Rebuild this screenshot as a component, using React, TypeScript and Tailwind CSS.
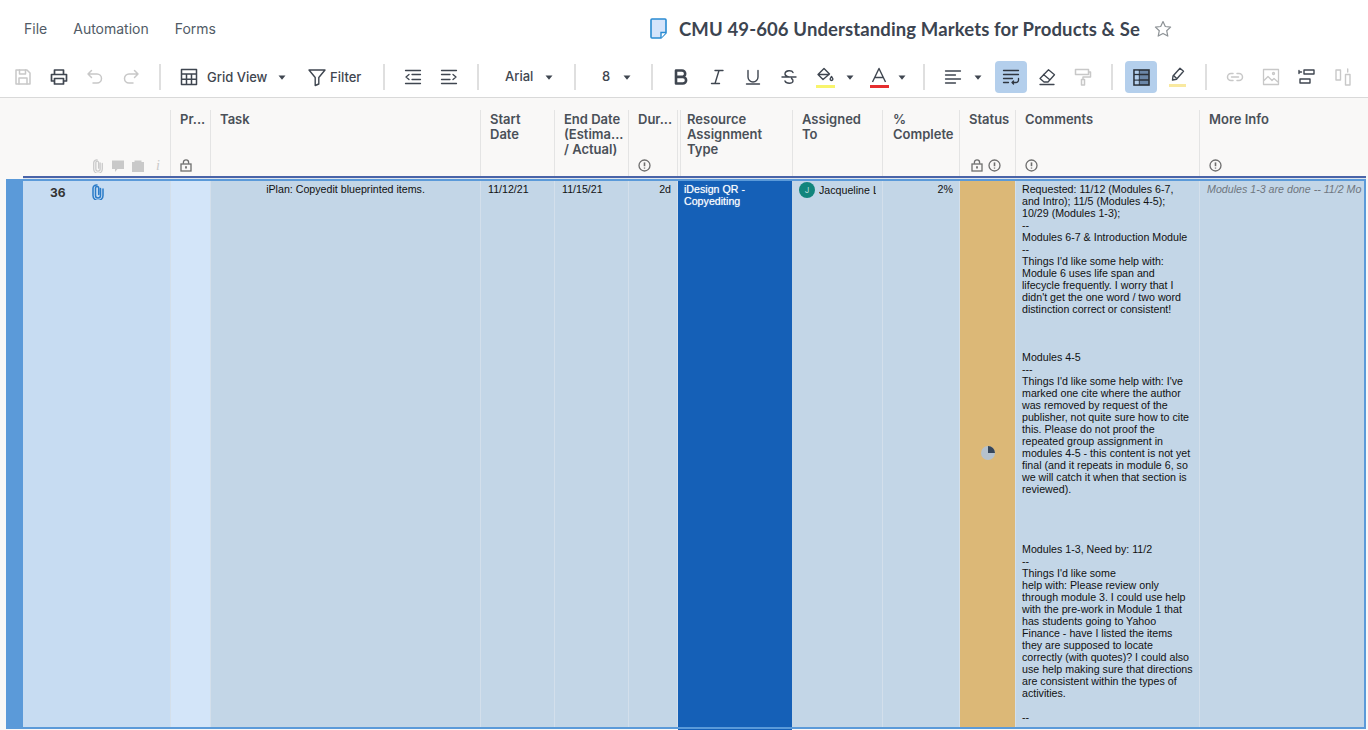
const commentLines = [
  "Requested: 11/12 (Modules 6-7,",
  "and Intro); 11/5 (Modules 4-5);",
  "10/29 (Modules 1-3);",
  "--",
  "Modules 6-7 & Introduction Module",
  "--",
  "Things I'd like some help with:",
  "Module 6 uses life span and",
  "lifecycle frequently. I worry that I",
  "didn't get the one word / two word",
  "distinction correct or consistent!",
  "",
  "",
  "",
  "Modules 4-5",
  "---",
  "Things I'd like some help with: I've",
  "marked one cite where the author",
  "was removed by request of the",
  "publisher, not quite sure how to cite",
  "this. Please do not proof the",
  "repeated group assignment in",
  "modules 4-5 - this content is not yet",
  "final (and it repeats in module 6, so",
  "we will catch it when that section is",
  "reviewed).",
  "",
  "",
  "",
  "",
  "Modules 1-3, Need by: 11/2",
  "--",
  "Things I'd like some",
  "help with: Please review only",
  "through module 3. I could use help",
  "with the pre-work in Module 1 that",
  "has students going to Yahoo",
  "Finance - have I listed the items",
  "they are supposed to locate",
  "correctly (with quotes)? I could also",
  "use help making sure that directions",
  "are consistent within the types of",
  "activities.",
  "",
  "--",
];

function Svg({ children, color = "#3f4650", size = 20, width = 1.5 }: { children: React.ReactNode; color?: string; size?: number; width?: number }) {
  return (
    <svg width={size} height={size} viewBox="0 0 20 20" fill="none" stroke={color} strokeWidth={width} strokeLinecap="round" strokeLinejoin="round">
      {children}
    </svg>
  );
}

function Btn({ children }: { children: React.ReactNode }) {
  return <div className="w-9 h-8 flex items-center justify-center shrink-0">{children}</div>;
}

function Sep() {
  return <div className="w-[2px] h-[26px] mx-[10px] bg-[#dfdfdf] shrink-0" />;
}

function Caret({ className }: { className: string }) {
  return (
    <div className={`flex items-center shrink-0 ${className}`}>
      <svg width="8" height="5" viewBox="0 0 8 5">
        <path d="M0.5 0.5h7L4 4.8z" fill="#3f4650" />
      </svg>
    </div>
  );
}

function InfoIcon() {
  return (
    <svg width="13" height="13" viewBox="0 0 13 13" fill="none">
      <circle cx="6.500" cy="6.500" r="5.500" stroke="#6e6e6e" strokeWidth="1.300" />
      <path d="M6.500 3.400v3.800" stroke="#6e6e6e" strokeWidth="1.600" />
      <path d="M6.500 8.500v1.100" stroke="#6e6e6e" strokeWidth="1.400" />
    </svg>
  );
}

function LockIcon() {
  return (
    <svg width="12" height="13" viewBox="0 0 12 13" fill="none">
      <rect x="1" y="5" width="10" height="7" stroke="#6e6e6e" strokeWidth="1.300" />
      <path d="M3.400 4.800V3.400a2.600 2.600 0 0 1 5.200 0v1.400" stroke="#6e6e6e" strokeWidth="1.300" />
      <path d="M6 7.200v2.200" stroke="#6e6e6e" strokeWidth="1.800" />
    </svg>
  );
}

function Clip({ color, size = 14 }: { color: string; size?: number }) {
  return (
    <svg width={size} height={size + 2} viewBox="0 0 14 16" fill="none" stroke={color} strokeWidth="1.500" strokeLinecap="round">
      <path d="M9.500 4.500v7a2.500 2.500 0 0 1-5 0V4a1.600 1.600 0 0 1 3.200 0v6.500" />
      <path d="M12 5v6.500a5 5 0 0 1-10 0V4a3.500 3.500 0 0 1 4-3" />
    </svg>
  );
}

function HeadCell({ w, lines, icons, pad = "pl-[9px]" }: { w: string; lines: string[]; icons?: React.ReactNode; pad?: string }) {
  return (
    <div className={`${w} ${pad} shrink-0 h-[66px] border-r border-[#e4e4e4] flex flex-col justify-between pt-[2px] pb-[4px] overflow-hidden`}>
      <div className="text-[13px] leading-[15px] font-semibold text-[#4a5058] whitespace-nowrap">
        {lines.map((l) => (
          <div key={l}>{l}</div>
        ))}
      </div>
      <div className="flex gap-[5px] h-[13px]">{icons}</div>
    </div>
  );
}

function BodyCell({ w, className = "", children }: { w: string; className?: string; children?: React.ReactNode }) {
  return <div className={`${w} shrink-0 border-r border-[#d3dfeb] overflow-hidden ${className}`}>{children}</div>;
}

export default function App() {
  return (
    <div className="w-[1368px] h-[730px] overflow-hidden bg-[#f9f8f7] font-['Inter',sans-serif]">
      {/* top bar */}
      <div className="bg-white h-[57px] flex items-center pl-6">
        <div className="flex gap-[26px] text-[14px] text-[#515b66]">
          <span>File</span>
          <span>Automation</span>
          <span>Forms</span>
        </div>
        <div className="ml-[434px] flex items-center">
          <svg width="17" height="21" viewBox="0 0 17 21" fill="none">
            <path d="M2 1h13a1 1 0 0 1 1 1v13l-5 5H2a1 1 0 0 1-1-1V2a1 1 0 0 1 1-1z" fill="#d5e4fb" stroke="#2a8bd2" strokeWidth="1.600" />
            <path d="M16 14.500h-5v5.500" fill="#fff" stroke="#2a8bd2" strokeWidth="1.400" />
          </svg>
          <span className="ml-[12px] mt-[2px] text-[18.5px] font-bold text-[#3c4450] font-['Lato',sans-serif] tracking-[0.12px] whitespace-nowrap">
            CMU 49-606 Understanding Markets for Products &amp; Se
          </span>
          <svg className="ml-[14px]" width="18" height="18" viewBox="0 0 18 18" fill="none">
            <path d="M9 1.500l2.300 5 5.300.6-3.900 3.600 1.100 5.400L9 13.400l-4.800 2.700 1.100-5.400L1.400 7.100l5.300-.6z" stroke="#8d9296" strokeWidth="1.200" strokeLinejoin="round" />
          </svg>
        </div>
      </div>

      {/* toolbar */}
      <div className="bg-white h-[40px] border-b border-[#d9d9d9] box-content flex items-center pl-[5px] text-[13px] font-medium text-[#3f4650]">
        <Btn>
          <Svg color="#c8c8c8">
            <path d="M3 3h11l3 3v11H3z" />
            <path d="M6.500 3v4h6V3M6 17v-6h8v6" />
          </Svg>
        </Btn>
        <Btn>
          <Svg width={1.7}>
            <path d="M5.500 7V3h9v4M5 14H2.500V7.500h15V14H15" />
            <path d="M5.500 11.500h9V17h-9z" />
          </Svg>
        </Btn>
        <Btn>
          <Svg color="#c8c8c8">
            <path d="M6.500 3.500L3 7l3.500 3.500M3 7h9a4.500 4.500 0 0 1 0 9H8" />
          </Svg>
        </Btn>
        <Btn>
          <Svg color="#c8c8c8">
            <path d="M13.500 3.500L17 7l-3.500 3.500M17 7H8a4.500 4.500 0 0 0 0 9h4" />
          </Svg>
        </Btn>
        <Sep />
        <Btn>
          <Svg>
            <path d="M2.500 2.500h15v15h-15zM2.500 7h15M2.500 12.200h15M7.500 7v10.500M12.500 7v10.500" />
          </Svg>
        </Btn>
        <span className="w-[71px] shrink-0 mt-[2px]">Grid View</span>
        <Caret className="w-[21px]" />
        <div className="w-[8px] shrink-0" />
        <svg width="20" height="20" viewBox="0 0 20 20" fill="none" stroke="#3f4650" strokeWidth="1.400" strokeLinejoin="round" className="shrink-0">
          <path d="M2 3h16l-6.200 7.500V17l-3.600 1.500v-8z" />
        </svg>
        <span className="ml-[3px] w-[53px] shrink-0 mt-[2px]">Filter</span>
        <div className="w-[2px] h-[26px] bg-[#dfdfdf] shrink-0" />
        <div className="w-[10px] shrink-0" />
        <Btn>
          <Svg width={1.3}>
            <path d="M2.500 3.500h15M2.500 16.500h15M9 7.500h8.500M9 12.500h8.500M6 7.500L3 10l3 2.500" />
          </Svg>
        </Btn>
        <Btn>
          <Svg width={1.3}>
            <path d="M2.500 3.500h15M2.500 16.500h15M2.500 7.500H11M2.500 12.500H11M14 7.500l3 2.500-3 2.500" />
          </Svg>
        </Btn>
        <Sep />
        <span className="w-[56px] pl-[16px] shrink-0">Arial</span>
        <Caret className="w-[19px]" />
        <Sep />
        <span className="w-[30px] pl-[16px] shrink-0">8</span>
        <Caret className="w-[25px] pl-[7px]" />
        <Sep />
        <Btn>
          <svg width="20" height="20" viewBox="0 0 20 20" fill="none" stroke="#3f4650" strokeWidth="2.600" strokeLinejoin="round">
            <path d="M5 3.500h6a3.200 3.200 0 0 1 0 6.400H5zM5 9.900h6.800a3.300 3.300 0 0 1 0 6.600H5z" />
          </svg>
        </Btn>
        <Btn>
          <Svg width={1.4}>
            <path d="M8 3.500h8M4.500 16.500h8M12 3.500l-4 13" />
          </Svg>
        </Btn>
        <Btn>
          <Svg width={1.4}>
            <path d="M5 3.500V10a5 5 0 0 0 10 0V3.500M3.500 17h13" />
          </Svg>
        </Btn>
        <Btn>
          <Svg width={1.4}>
            <path d="M14 5.500C13 3 6.500 3 6 6.500c-.3 2 2 3 4 3.500M3 10h14M6 14c1 3 8 3 8 0 0-1-.5-2-1.500-2.500" />
          </Svg>
        </Btn>
        <Btn>
          <div className="flex flex-col items-center">
            <svg width="18" height="16" viewBox="0 0 18 16" fill="none" stroke="#3f4650" strokeWidth="1.400" strokeLinejoin="round">
              <path d="M8 1.500l-6 6 5 5 6.500-5.500zM2 7.500h11.500" />
              <path d="M15.500 9.500c-1 1.500-1.400 2-1.400 2.600a1.400 1.400 0 0 0 2.800 0c0-.6-.4-1.100-1.400-2.600z" />
            </svg>
            <div className="w-[19px] h-[3px] mt-[2px] bg-[#f8f46c]" />
          </div>
        </Btn>
        <Caret className="w-[18px] pl-[3px]" />
        <Btn>
          <div className="flex flex-col items-center">
            <svg width="18" height="16" viewBox="0 0 18 16" fill="none" stroke="#3f4650" strokeWidth="1.400" strokeLinejoin="round">
              <path d="M2.500 15L9 1.500 15.500 15M4.800 10.500h8.400" />
            </svg>
            <div className="w-[19px] h-[3px] mt-[2px] bg-[#e62e2e]" />
          </div>
        </Btn>
        <Caret className="w-[16px] pl-[1px]" />
        <Sep />
        <Btn>
          <Svg width={1.3}>
            <path d="M2.500 4h15M2.500 8h10M2.500 12h15M2.500 16h10" />
          </Svg>
        </Btn>
        <Caret className="w-[22px] pl-[3px]" />
        <Btn>
          <div className="w-8 h-8 rounded-[4px] bg-[#b4cfec] flex items-center justify-center">
            <Svg width={1.3} color="#2f3640">
              <path d="M2.500 3.500h15M2.500 7.500h15M2.500 11.500h9M2.500 15.500h5M17.500 11.500v1.500a2.500 2.500 0 0 1-2.500 2.500h-4M12.500 14l-1.500 1.500 1.500 1.500" />
            </Svg>
          </div>
        </Btn>
        <Btn>
          <Svg width={1.3}>
            <path d="M11.500 2.800l6 5-6.500 7.200H7l-4-3.500zM6.500 7.500l6 5M3 17.500h14" />
          </Svg>
        </Btn>
        <Btn>
          <Svg color="#c8c8c8" width={1.5}>
            <path d="M2.500 2.500h13v5h-13zM15.500 5h2v5H10v2.500M8.500 12.500h3v5.500h-3z" />
          </Svg>
        </Btn>
        <Sep />
        <Btn>
          <div className="w-8 h-8 rounded-[4px] bg-[#b4cfec] flex items-center justify-center">
            <svg width="17" height="17" viewBox="0 0 17 17">
              <rect x="1" y="1" width="15" height="15" fill="#6b87a8" stroke="#2a3038" strokeWidth="1.600" />
              <path d="M1 5.500h15M1 11h15M6 1v15" stroke="#2a3038" strokeWidth="1.300" />
              <path d="M1.800 1.800h4v3h-4zM1.800 6.200h4v4.200h-4zM1.800 11.700h4v3.500h-4z" fill="#b4cfec" />
            </svg>
          </div>
        </Btn>
        <Btn>
          <div className="flex flex-col items-center">
            <svg width="18" height="16" viewBox="0 0 18 16" fill="none" stroke="#3f4650" strokeWidth="1.400" strokeLinejoin="round">
              <path d="M12 1.200l3.500 3-7 8-4 .8.500-4z" />
              <path d="M5.500 8.500l3.200 3" />
            </svg>
            <div className="w-[17px] h-[3px] mt-[1px] bg-[#f9e9a0]" />
          </div>
        </Btn>
        <Sep />
        <Btn>
          <Svg color="#c8c8c8" width={1.5}>
            <path d="M8 6.500H6a3.500 3.500 0 0 0 0 7h2M12 6.500h2a3.500 3.500 0 0 1 0 7h-2M6.500 10h7" />
          </Svg>
        </Btn>
        <Btn>
          <Svg color="#c8c8c8" width={1.3}>
            <path d="M2.500 2.500h15v15h-15zM2.500 14l4.500-4.500 4 4 2-2 4.500 4" />
            <circle cx="12.500" cy="6.500" r="1" />
          </Svg>
        </Btn>
        <Btn>
          <Svg width={1.4}>
            <path d="M7 3h10v4H7zM3 12h10v4H3zM3 5h1.500M2 3.500v3" />
          </Svg>
        </Btn>
        <Btn>
          <Svg color="#c8c8c8" width={1.4}>
            <path d="M3 3h4.500v10H3zM12.500 7.500H17V18h-4.500zM14.700 2v3" />
          </Svg>
        </Btn>
      </div>

      {/* header row */}
      <div className="h-[78px] pt-3 flex">
        <div className="w-[171px] shrink-0 h-[66px] border-r border-[#e4e4e4] flex items-end pb-[3px] pl-[92px] gap-[8px]">
          <Clip color="#c9c9c9" size={12} />
          <svg width="12" height="14" viewBox="0 0 12 14">
            <path d="M0 1.500h12v8.500H5.500L3 13v-3H0z" fill="#c9c9c9" />
          </svg>
          <svg width="12" height="14" viewBox="0 0 12 14">
            <path d="M2.500 3V1.500h7V3H12v10H0V3z" fill="#c9c9c9" />
          </svg>
          <span className="text-[14px] leading-[14px] italic text-[#c9c9c9] font-['Liberation_Serif',serif] pl-[4px]">i</span>
        </div>
        <HeadCell w="w-[40px]" lines={["Pr..."]} icons={<LockIcon />} />
        <HeadCell w="w-[270px]" lines={["Task"]} />
        <HeadCell w="w-[74px]" lines={["Start", "Date"]} />
        <HeadCell w="w-[74px]" lines={["End Date", "(Estima...", "/ Actual)"]} />
        <HeadCell w="w-[49px]" lines={["Dur..."]} icons={<InfoIcon />} />
        <div className="w-[2px] shrink-0" />
        <HeadCell w="w-[113px]" lines={["Resource", "Assignment", "Type"]} pad="pl-[6px] border-l border-l-[#e4e4e4]" />
        <HeadCell w="w-[90px]" lines={["Assigned", "To"]} />
        <HeadCell w="w-[77px]" lines={["%", "Complete"]} pad="pl-[10px]" />
        <HeadCell w="w-[56px]" lines={["Status"]} icons={<div className="ml-[2px] flex gap-[5px]"><LockIcon /><InfoIcon /></div>} />
        <HeadCell w="w-[184px]" lines={["Comments"]} icons={<InfoIcon />} />
        <div className="w-[167px] pl-[9px] shrink-0 h-[66px] flex flex-col justify-between pt-[2px] pb-[4px]">
          <div className="text-[13px] leading-[15px] font-semibold text-[#4a5058]">More Info</div>
          <div className="h-[13px]">
            <InfoIcon />
          </div>
        </div>
      </div>

      {/* selection lines */}
      <div className="ml-[23px] w-[1343px] h-[2px] bg-[#4a64a8]" />
      <div className="ml-[23px] w-[1343px] h-[1px] bg-[#dfe6ef]" />
      <div className="ml-[6px] w-[1360px] h-[2px] bg-[#5b9ad9]" />

      {/* selected row */}
      <div className="ml-[6px] w-[1360px] h-[548px] flex border-b-2 border-r-2 border-[#5b9ad9] text-[10.67px] leading-[12px] text-[#111] font-['Liberation_Sans',sans-serif]">
        <div className="w-[17px] shrink-0 bg-[#5b9ad9]" />
        <div className="w-[148px] shrink-0 bg-[#c7dcf2] border-r border-[#d3dfeb] flex pt-[3px] pl-[27px]">
          <span className="w-[41px] font-['Inter',sans-serif] font-bold text-[12px] leading-[16px] text-[#333] mt-[1px]">36</span>
          <div>
            <Clip color="#2a7bc8" />
          </div>
        </div>
        <BodyCell w="w-[40px]" className="bg-[#d3e5f9]" />
        <BodyCell w="w-[270px]" className="bg-[#c3d6e7] text-center pt-[2px]">iPlan: Copyedit blueprinted items.</BodyCell>
        <BodyCell w="w-[74px]" className="bg-[#c3d6e7] pl-[7px] pt-[2px]">11/12/21</BodyCell>
        <BodyCell w="w-[74px]" className="bg-[#c3d6e7] pl-[7px] pt-[2px]">11/15/21</BodyCell>
        <BodyCell w="w-[49px]" className="bg-[#c3d6e7] text-right pr-[6px] pt-[2px]">2d</BodyCell>
        <div className="w-[114px] shrink-0 bg-[#1560b7] text-white [text-shadow:0_0_1px_rgba(255,255,255,0.6)] pl-[6px] pt-[2px] pr-[20px]">iDesign QR - Copyediting</div>
        <BodyCell w="w-[91px]" className="bg-[#c3d6e7] flex items-start pl-[7px] pt-[1px] whitespace-nowrap">
          <div className="w-4 h-4 rounded-full bg-[#12857c] text-[8px] leading-4 text-center text-[#b5dcd8] font-['Inter',sans-serif] shrink-0">J</div>
          <span className="ml-[4px] pt-[2px] w-[57px] overflow-hidden">Jacqueline L</span>
        </BodyCell>
        <BodyCell w="w-[77px]" className="bg-[#c3d6e7] text-right pr-[6px] pt-[2px]">2%</BodyCell>
        <BodyCell w="w-[56px]" className="bg-[#dcb877] flex items-center justify-center">
          <svg width="16" height="16" viewBox="0 0 16 16" className="mt-[-2px]">
            <circle cx="8" cy="8" r="7" fill="#b5c1cc" />
            <path d="M8 1a7 7 0 0 1 7 7H8z" fill="#36465a" />
          </svg>
        </BodyCell>
        <BodyCell w="w-[184px]" className="bg-[#c3d6e7] pl-[6px] pt-[2px] whitespace-nowrap">
          {commentLines.map((line, i) => (
            <div key={i} className="h-[12px]">
              {line}
            </div>
          ))}
        </BodyCell>
        <div className="flex-1 min-w-0 bg-[#c3d6e7] pl-[7px] pt-[2px] italic text-[#6f7780] whitespace-nowrap">
          Modules 1-3 are done -- 11/2 Mo
        </div>
      </div>
      {/* bit of the next row under the selection */}
      <div className="flex h-[1px]">
        <div className="w-[678px] shrink-0" />
        <div className="w-[114px] shrink-0 bg-[#1560b7]" />
      </div>
    </div>
  );
}
